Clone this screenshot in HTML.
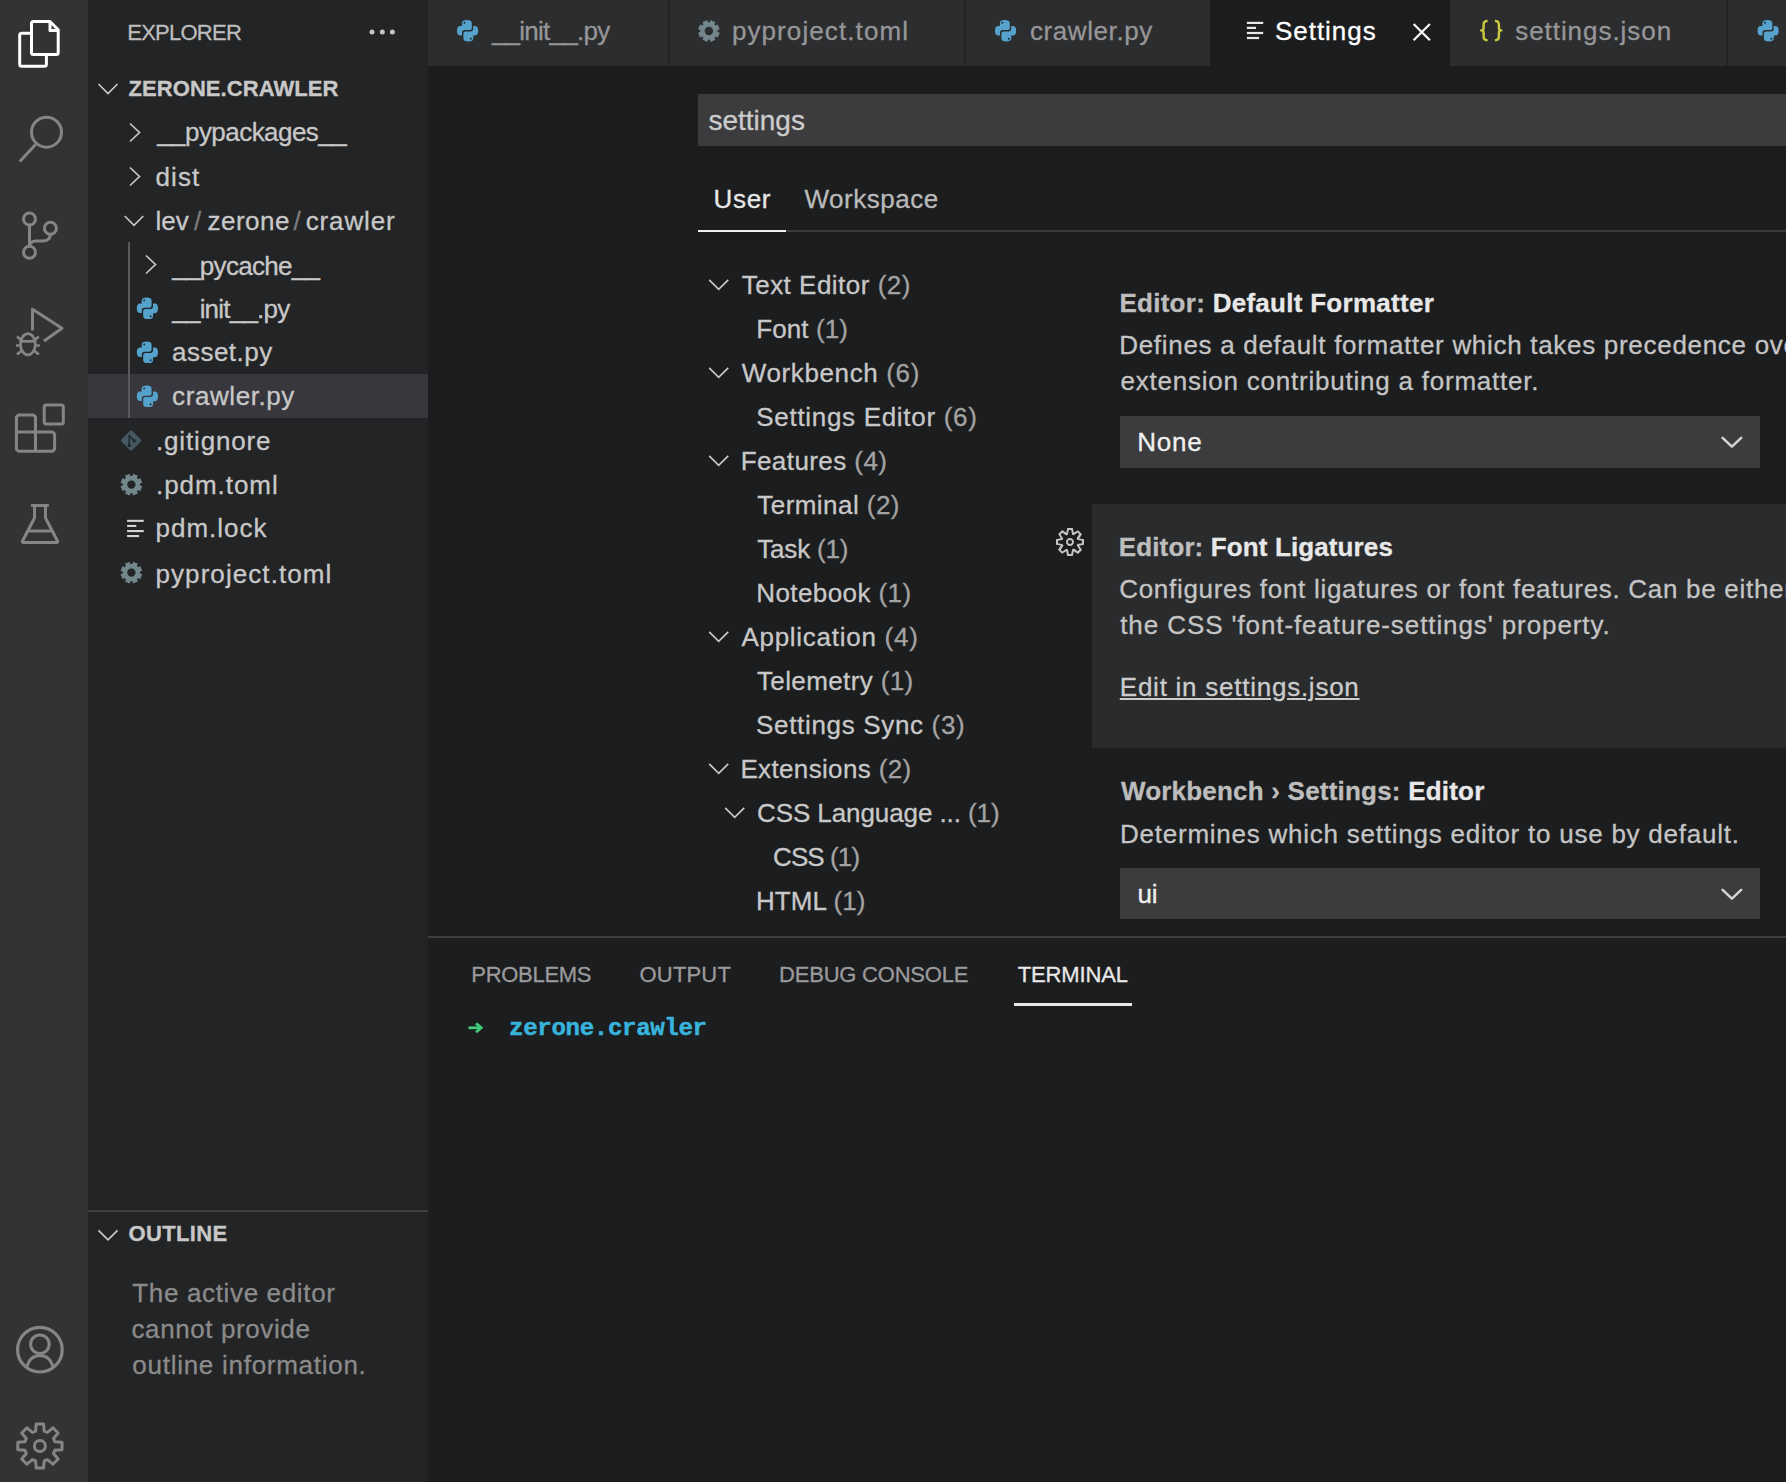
<!DOCTYPE html>
<html><head><meta charset="utf-8">
<style>
html,body{margin:0;padding:0;}
body{width:1786px;height:1482px;position:relative;overflow:hidden;background:#1c1d1f;font-family:"Liberation Sans",sans-serif;}
.a{position:absolute;}
.t{position:absolute;white-space:pre;line-height:1;font-size:26px;color:#c8c8c8;-webkit-text-stroke:0.3px currentColor;}
svg{position:absolute;overflow:visible;}
.n{color:#a3a3a3;}
</style></head><body>

<!-- activity bar -->
<div class="a" style="left:0;top:0;width:88px;height:1482px;background:#323335;"></div>
<svg style="left:0;top:0" width="88" height="1482" fill="none" stroke-linejoin="round">
  <!-- explorer -->
  <g stroke="#ffffff" stroke-width="3">
    <path d="M31.5,23.5 Q31.5,21.5 33.5,21.5 L50,21.5 L58.2,29.7 L58.2,52.5 Q58.2,54.5 56.2,54.5 L33.5,54.5 Q31.5,54.5 31.5,52.5 Z"/>
    <path d="M50,21.5 L50,30.5 L58.2,30.5"/>
    <path d="M31.5,33.2 L21.7,33.2 Q19.7,33.2 19.7,35.2 L19.7,64.3 Q19.7,66.3 21.7,66.3 L44.4,66.3 Q46.4,66.3 46.4,64.3 L46.4,54.5"/>
  </g>
  <g stroke="#858585" stroke-width="3">
    <!-- search -->
    <circle cx="46.5" cy="132.2" r="15"/>
    <path d="M19.8,161.5 L35.6,144.6"/>
    <!-- scm -->
    <circle cx="29.5" cy="219" r="6"/>
    <circle cx="50.4" cy="228.2" r="6"/>
    <circle cx="29.5" cy="252.3" r="6"/>
    <path d="M29.5,225 L29.5,246.3"/>
    <path d="M50.4,234.2 Q50.4,241 42,241 L36,241 Q29.5,241 29.5,247"/>
    <!-- run/debug -->
    <path d="M32.5,330.4 L32.5,309.3 L62,328.3 L44,341"/>
    <!-- extensions -->
    <path d="M18.4,415 L33.5,415 L35.5,417 L35.5,432 L52.6,432 L54.6,434 L54.6,449.2 L52.6,451.2 L18.4,451.2 L16.4,449.2 L16.4,417 Z"/>
    <path d="M16.4,432 L35.5,432 L35.5,451.2"/>
    <rect x="44.2" y="404.9" width="19.1" height="19" rx="2"/>
    <!-- testing flask -->
    <path d="M31,505.5 L48.8,505.5"/>
    <path d="M34.5,505.5 L34.5,518 L22.5,541 Q22,542.5 23.5,542.5 L56.5,542.5 Q58,542.5 57.5,541 L45.5,518 L45.5,505.5"/>
    <path d="M28,531 L52,531"/>
    <!-- account -->
    <circle cx="39.9" cy="1349.7" r="22.3" stroke-width="3.2"/>
    <circle cx="39.9" cy="1344.2" r="9.3"/>
    <path d="M26.5,1367.5 Q30,1355.5 39.9,1355.5 Q49.8,1355.5 53.3,1367.5"/>
    <!-- gear -->
    <path transform="translate(39.9,1446)" d="M22.10,-3.68 L22.10,3.68 L14.88,4.32 L13.58,7.47 L18.22,13.02 L13.02,18.22 L7.47,13.58 L4.32,14.88 L3.68,22.10 L-3.68,22.10 L-4.32,14.88 L-7.47,13.58 L-13.02,18.22 L-18.22,13.02 L-13.58,7.47 L-14.88,4.32 L-22.10,3.68 L-22.10,-3.68 L-14.88,-4.32 L-13.58,-7.47 L-18.22,-13.02 L-13.02,-18.22 L-7.47,-13.58 L-4.32,-14.88 L-3.68,-22.10 L3.68,-22.10 L4.32,-14.88 L7.47,-13.58 L13.02,-18.22 L18.22,-13.02 L13.58,-7.47 L14.88,-4.32 Z"/>
    <circle cx="39.9" cy="1446" r="5.5"/>
  </g>
  <!-- bug -->
  <g stroke="#858585" stroke-width="2.7" stroke-linecap="butt" fill="none">
    <ellipse cx="27.9" cy="344.2" rx="7.4" ry="10.6"/>
    <path d="M20.6,341.3 L35.2,341.3"/>
    <path d="M16,345.5 L20.5,345.5 M35.3,345.5 L39.8,345.5"/>
    <path d="M17,336.5 L21.8,340.6 M38.8,336.5 L34,340.6"/>
    <path d="M17,354.6 L21.8,350.4 M38.8,354.6 L34,350.4"/>
  </g>
</svg>

<!-- sidebar -->
<div class="a" style="left:88px;top:0;width:340px;height:1482px;background:#232426;"></div>
<svg width="0" height="0" style="position:absolute">
  <defs>
    <g id="py">
      <path fill="#55a2cc" d="M4.9,3.2 C4.9,1 6.5,0 9.9,0 C13.2,0 14.8,1 14.8,3.2 L14.8,8.0 C14.8,9.4 13.9,10.1 12.5,10.1 L7.6,10.1 C6.0,10.1 5.0,11.1 5.0,12.6 L5.0,15.5 L3.4,15.5 C1.0,15.5 0,13.6 0,10.7 C0,7.8 1.0,5.9 3.4,5.9 L4.9,5.9 Z"/>
      <path fill="#55a2cc" transform="rotate(180 10.6 10.75)" d="M4.9,3.2 C4.9,1 6.5,0 9.9,0 C13.2,0 14.8,1 14.8,3.2 L14.8,8.0 C14.8,9.4 13.9,10.1 12.5,10.1 L7.6,10.1 C6.0,10.1 5.0,11.1 5.0,12.6 L5.0,15.5 L3.4,15.5 C1.0,15.5 0,13.6 0,10.7 C0,7.8 1.0,5.9 3.4,5.9 L4.9,5.9 Z"/>
      <circle cx="7.4" cy="2.8" r="0.95" fill="#1a2a36"/>
      <circle cx="13.8" cy="18.7" r="0.95" fill="#1a2a36"/>
    </g>
    <path id="sgear" fill-rule="evenodd" stroke-linejoin="round" d="M1.64,-10.88 L6.54,-8.85 L5.39,-6.83 L6.83,-5.39 L8.85,-6.54 L10.88,-1.64 L8.64,-1.02 L8.64,1.02 L10.88,1.64 L8.85,6.54 L6.83,5.39 L5.39,6.83 L6.54,8.85 L1.64,10.88 L1.02,8.64 L-1.02,8.64 L-1.64,10.88 L-6.54,8.85 L-5.39,6.83 L-6.83,5.39 L-8.85,6.54 L-10.88,1.64 L-8.64,1.02 L-8.64,-1.02 L-10.88,-1.64 L-8.85,-6.54 L-6.83,-5.39 L-5.39,-6.83 L-6.54,-8.85 L-1.64,-10.88 L-1.02,-8.64 L1.02,-8.64 Z M-4.2,0 A4.2,4.2 0 1 0 4.2,0 A4.2,4.2 0 1 0 -4.2,0 Z"/>
  </defs>
</svg>
<div class="a" style="left:425px;top:0;width:3px;height:1482px;background:#212224;"></div>
<!-- selected row -->
<div class="a" style="left:88px;top:374px;width:340px;height:44px;background:#37373d;"></div>
<!-- indent guide -->
<div class="a" style="left:128px;top:242px;width:2px;height:176px;background:#5a5a5c;"></div>
<!-- outline border -->
<div class="a" style="left:88px;top:1210px;width:340px;height:2px;background:#404042;"></div>

<svg style="left:0;top:0" width="428" height="1482" fill="none">
  <!-- dots -->
  <g fill="#c5c5c5"><circle cx="372" cy="32" r="2.5"/><circle cx="382.3" cy="32" r="2.5"/><circle cx="392.4" cy="32" r="2.5"/></g>
  <g stroke="#c8c8c8" stroke-width="1.7" stroke-linejoin="miter" stroke-linecap="butt">
    <path d="M98.5,84 L108,93.5 L117.5,84"/>
    <path d="M130,123.5 L139.5,132.5 L130,141.5"/>
    <path d="M130,167.5 L139.5,176.5 L130,185.5"/>
    <path d="M124.7,216 L134,225.3 L143.3,216"/>
    <path d="M146,255.5 L155.5,264.5 L146,273.5"/>
    <path d="M98.5,1230.3 L108,1239.8 L117.5,1230.3"/>
  </g>
  <use href="#py" x="136.8" y="297.6"/>
  <use href="#py" x="136.8" y="341.6"/>
  <use href="#py" x="136.8" y="385.6"/>
  <!-- git diamond -->
  <g transform="translate(131.1,440.6) rotate(45)"><rect x="-7.6" y="-7.6" width="15.2" height="15.2" rx="1.8" fill="#46585f"/></g>
  <g stroke="#1f2a2e" stroke-width="1.6" fill="none"><path d="M129.3,434.5 L129.3,445.5 M129.6,436 L134.3,441"/></g>
  <g fill="#1f2a2e"><circle cx="129.3" cy="445.5" r="1.7"/><circle cx="134.3" cy="441" r="1.7"/></g>
  <use href="#sgear" x="131.4" y="484.6" fill="#72868c"/>
  <use href="#sgear" x="131.4" y="572.6" fill="#72868c"/>
  <!-- pdm.lock lines -->
  <g fill="#d4d4d4">
    <rect x="127.1" y="519.8" width="16.6" height="2.1"/>
    <rect x="127.1" y="524.9" width="9.2" height="2.1"/>
    <rect x="127.1" y="530" width="16.6" height="2.1"/>
    <rect x="127.1" y="535" width="12" height="2.1"/>
  </g>
</svg>

<div class="t" id="s_explorer" style="left:127.3px;top:21.8px;font-size:22px;color:#bdbdbd;letter-spacing:-0.76px">EXPLORER</div>
<div class="t" id="s_root" style="left:128.5px;top:77.6px;font-size:22px;font-weight:bold;letter-spacing:0.07px">ZERONE.CRAWLER</div>
<div class="t" id="s_pyp" style="left:157.2px;top:119.4px;letter-spacing:-0.55px">__pypackages__</div>
<div class="t" id="s_dist" style="left:155.6px;top:163.6px;letter-spacing:1.03px">dist</div>
<div class="t" id="s_lev" style="left:155.5px;top:208px;letter-spacing:0.00px">lev</div>
<div class="t" style="left:194px;top:208px;color:#7c7c7c">/</div>
<div class="t" id="s_zer" style="left:207.5px;top:208px;letter-spacing:0.50px">zerone</div>
<div class="t" style="left:293.5px;top:208px;color:#7c7c7c">/</div>
<div class="t" id="s_craw" style="left:305.7px;top:208px;letter-spacing:0.87px">crawler</div>
<div class="t" id="s_pyc" style="left:172.3px;top:253.2px;letter-spacing:-0.70px">__pycache__</div>
<div class="t" id="s_init" style="left:172.3px;top:296px;letter-spacing:-0.79px">__init__.py</div>
<div class="t" id="s_asset" style="left:172.1px;top:339px;letter-spacing:0.46px">asset.py</div>
<div class="t" id="s_crawpy" style="left:172.1px;top:382.8px;letter-spacing:0.58px">crawler.py</div>
<div class="t" id="s_git" style="left:156.0px;top:427.9px;letter-spacing:0.84px">.gitignore</div>
<div class="t" id="s_pdmt" style="left:156.0px;top:471.5px;letter-spacing:0.94px">.pdm.toml</div>
<div class="t" id="s_lock" style="left:155.5px;top:515px;letter-spacing:1.00px">pdm.lock</div>
<div class="t" id="s_pyproj" style="left:155.5px;top:560.6px;letter-spacing:1.07px">pyproject.toml</div>

<div class="t" id="s_outline" style="left:128.5px;top:1223.1px;font-size:22px;font-weight:bold;letter-spacing:0.37px">OUTLINE</div>
<div class="t" id="s_o1" style="left:132.3px;top:1280px;color:#8b8b8b;letter-spacing:0.65px">The active editor</div>
<div class="t" id="s_o2" style="left:131.5px;top:1316px;color:#8b8b8b;letter-spacing:0.6px">cannot provide</div>
<div class="t" id="s_o3" style="left:132.3px;top:1352px;color:#8b8b8b;letter-spacing:0.73px">outline information.</div>

<!-- editor -->
<!-- tabs -->
<div class="a" style="left:428px;top:0;width:1358px;height:66px;background:#2c2d2f;"></div>
<div class="a" style="left:668px;top:0;width:1.5px;height:66px;background:#232426;"></div>
<div class="a" style="left:964px;top:0;width:1.5px;height:66px;background:#232426;"></div>
<div class="a" style="left:1210px;top:0;width:240px;height:66px;background:#1c1d1f;"></div>
<div class="a" style="left:1726px;top:0;width:1.5px;height:66px;background:#232426;"></div>
<svg style="left:0;top:0" width="1786" height="66" fill="none">
  <use href="#py" x="457" y="20"/>
  <use href="#sgear" x="708.9" y="31" fill="#72868c"/>
  <use href="#py" x="995" y="20"/>
  <g fill="#e8e8e8">
    <rect x="1246.9" y="21.8" width="16.3" height="2.2"/>
    <rect x="1246.9" y="26.8" width="9.1" height="2.2"/>
    <rect x="1246.9" y="31.9" width="16.3" height="2.2"/>
    <rect x="1246.9" y="36.9" width="12.2" height="2.2"/>
  </g>
  <path d="M1413.6,24 L1429.9,40.3 M1429.9,24 L1413.6,40.3" stroke="#f4f4f4" stroke-width="2.3"/>
  <use href="#py" x="1757.5" y="20"/>
</svg>
<svg style="left:0;top:0" width="1786" height="66" fill="none"><g stroke="#cbcb41" stroke-width="2.4" stroke-linejoin="round">
  <path d="M1487.6,20.9 Q1483.6,20.9 1483.6,24.8 L1483.6,28 Q1483.6,30.4 1481.2,30.4 Q1483.6,30.4 1483.6,32.8 L1483.6,36.2 Q1483.6,40.2 1487.6,40.2"/>
  <path d="M1494.9,20.9 Q1498.9,20.9 1498.9,24.8 L1498.9,28 Q1498.9,30.4 1501.3,30.4 Q1498.9,30.4 1498.9,32.8 L1498.9,36.2 Q1498.9,40.2 1494.9,40.2"/>
</g></svg>
<div class="t" id="tb1" style="left:491.9px;top:18.4px;color:#969698;letter-spacing:-0.74px">__init__.py</div>
<div class="t" id="tb2" style="left:731.9px;top:18.4px;color:#969698;letter-spacing:1.10px">pyproject.toml</div>
<div class="t" id="tb3" style="left:1029.9px;top:18.4px;color:#969698;letter-spacing:0.60px">crawler.py</div>
<div class="t" id="tb4" style="left:1275.0px;top:18.4px;color:#ffffff;letter-spacing:0.96px">Settings</div>
<div class="t" id="tb5" style="left:1515.2px;top:18.4px;color:#969698;letter-spacing:0.95px">settings.json</div>

<!-- settings header -->
<div class="a" style="left:698px;top:94px;width:1088px;height:52px;background:#3c3c3e;"></div>
<div class="t" id="e_search" style="left:708.5px;top:106.5px;font-size:28px;color:#cccccc;;letter-spacing:-0.01px">settings</div>
<div class="t" id="e_user" style="left:713.6px;top:185.8px;color:#e8e8e8;letter-spacing:0.63px">User</div>
<div class="t" id="e_ws" style="left:804.4px;top:185.8px;color:#bababa;letter-spacing:0.53px">Workspace</div>
<div class="a" style="left:698px;top:230px;width:1088px;height:2px;background:#3a3a3c;"></div>
<div class="a" style="left:698px;top:229.6px;width:88px;height:2.6px;background:#f0f0f0;"></div>

<!-- TOC -->
<svg style="left:0;top:0" width="1786" height="940" fill="none">
  <g stroke="#c8c8c8" stroke-width="1.7">
    <path d="M709.2,279.8 L718.7,289.3 L728.2,279.8"/>
    <path d="M709.2,367.8 L718.7,377.3 L728.2,367.8"/>
    <path d="M709.2,455.8 L718.7,465.3 L728.2,455.8"/>
    <path d="M709.2,631.8 L718.7,641.3 L728.2,631.8"/>
    <path d="M709.2,763.8 L718.7,773.3 L728.2,763.8"/>
    <path d="M725.2,807.8 L734.7,817.3 L744.2,807.8"/>
  </g>
</svg>
<div class="toc">
<div class="t" id="c1" style="left:741.7px;top:272.4px;letter-spacing:0.49px">Text Editor <span class="n">(2)</span></div>
<div class="t" id="c2" style="left:756.3px;top:316.4px;letter-spacing:0.07px">Font <span class="n">(1)</span></div>
<div class="t" id="c3" style="left:741.7px;top:360.4px;letter-spacing:0.63px">Workbench <span class="n">(6)</span></div>
<div class="t" id="c4" style="left:756.3px;top:404.4px;letter-spacing:0.69px">Settings Editor <span class="n">(6)</span></div>
<div class="t" id="c5" style="left:740.7px;top:448.4px;letter-spacing:0.42px">Features <span class="n">(4)</span></div>
<div class="t" id="c6" style="left:757.3px;top:492.4px;letter-spacing:0.45px">Terminal <span class="n">(2)</span></div>
<div class="t" id="c7" style="left:757.3px;top:536.4px;letter-spacing:-0.20px">Task <span class="n">(1)</span></div>
<div class="t" id="c8" style="left:756.3px;top:580.4px;letter-spacing:0.41px">Notebook <span class="n">(1)</span></div>
<div class="t" id="c9" style="left:741.4px;top:624.4px;letter-spacing:0.73px">Application <span class="n">(4)</span></div>
<div class="t" id="c10" style="left:757.0px;top:668.4px;letter-spacing:0.37px">Telemetry <span class="n">(1)</span></div>
<div class="t" id="c11" style="left:756.0px;top:712.4px;letter-spacing:0.67px">Settings Sync <span class="n">(3)</span></div>
<div class="t" id="c12" style="left:740.4px;top:756.4px;letter-spacing:0.35px">Extensions <span class="n">(2)</span></div>
<div class="t" id="c13" style="left:757.0px;top:800.4px;letter-spacing:-0.09px">CSS Language ... <span class="n">(1)</span></div>
<div class="t" id="c14" style="left:773.0px;top:844.4px;letter-spacing:-0.90px">CSS <span class="n">(1)</span></div>
<div class="t" id="c15" style="left:756.0px;top:888.4px;letter-spacing:0.09px">HTML <span class="n">(1)</span></div>
</div>

<!-- settings list -->
<div class="a" style="left:1092px;top:504px;width:694px;height:244px;background:#2a2b2d;"></div>
<svg style="left:1054px;top:525.8px" width="32" height="32" viewBox="0 0 16 16" fill="#c5c5c5">
  <path fill-rule="evenodd" d="M9.1 4.4L8.6 2H7.4l-.5 2.4-.7.3-2-1.3-.9.8 1.3 2-.2.7-2.4.5v1.2l2.4.5.3.8-1.3 2 .8.8 2-1.3.8.3.4 2.3h1.2l.5-2.4.8-.3 2 1.3.8-.8-1.3-2 .3-.8 2.3-.4V7.4l-2.4-.5-.3-.8 1.3-2-.8-.8-2 1.3-.7-.2zM9.4 1l.5 2.4L12 2.1l2 2-1.4 2.1 2.4.4v2.8l-2.4.5L14 12l-2 2-2.1-1.4-.5 2.4H6.6l-.5-2.4L4 13.9l-2-2 1.4-2.1L1 9.4V6.6l2.4-.5L2.1 4l2-2 2.1 1.4.4-2.4h2.8zm.6 7c0 1.1-.9 2-2 2s-2-.9-2-2 .9-2 2-2 2 .9 2 2zM8 9c.6 0 1-.4 1-1s-.4-1-1-1-1 .4-1 1 .4 1 1 1z"/>
</svg>

<div class="t" id="r1t" style="left:1119.4px;top:289.7px;font-weight:bold;color:#bdbdbd;letter-spacing:0.28px">Editor: <span style="color:#e8e8e8">Default Formatter</span></div>
<div class="t" id="r1d1" style="left:1119.2px;top:331.8px;color:#c4c4c4;letter-spacing:0.7px">Defines a default formatter which takes precedence over any other setting</div>
<div class="t" id="r1d2" style="left:1120.4px;top:367.8px;color:#c4c4c4;letter-spacing:0.78px">extension contributing a formatter.</div>
<div class="a" style="left:1120px;top:416px;width:640px;height:52px;background:#3c3c3e;"></div>
<div class="t" id="r1v" style="left:1137.3px;top:429.2px;color:#f0f0f0;;letter-spacing:0.77px">None</div>

<div class="t" id="r2t" style="left:1118.8px;top:533.6px;font-weight:bold;color:#bdbdbd;letter-spacing:0.12px">Editor: <span style="color:#e8e8e8">Font Ligatures</span></div>
<div class="t" id="r2d1" style="left:1119.2px;top:576.2px;color:#c4c4c4;letter-spacing:0.7px">Configures font ligatures or font features. Can be either a boolean</div>
<div class="t" id="r2d2" style="left:1120.2px;top:612.2px;color:#c4c4c4;letter-spacing:0.91px">the CSS 'font-feature-settings' property.</div>
<div class="t" id="r2l" style="left:1119.8px;top:673.5px;color:#cccccc;letter-spacing:0.75px;text-decoration:underline;text-underline-offset:2px">Edit in settings.json</div>

<div class="t" id="r3t" style="left:1120.9px;top:777.9px;font-weight:bold;color:#bdbdbd;letter-spacing:0.21px">Workbench › Settings: <span style="color:#e8e8e8">Editor</span></div>
<div class="t" id="r3d1" style="left:1120.0px;top:820.5px;color:#c4c4c4;letter-spacing:0.76px">Determines which settings editor to use by default.</div>
<div class="a" style="left:1120px;top:868px;width:640px;height:51px;background:#3c3c3e;"></div>
<div class="t" id="r3v" style="left:1137.4px;top:881.1px;color:#f0f0f0;">ui</div>
<svg style="left:0;top:0" width="1786" height="940" fill="none">
  <g stroke="#d4d4d4" stroke-width="2.5" stroke-linecap="round" stroke-linejoin="round">
    <path d="M1722.6,437.8 L1731.9,446.7 L1741.2,437.8"/>
    <path d="M1722.6,889.8 L1731.9,898.7 L1741.2,889.8"/>
  </g>
</svg>

<!-- panel -->
<div class="a" style="left:428px;top:936px;width:1358px;height:2px;background:#3e3e40;"></div>
<div class="t" id="p1" style="left:471.3px;top:964.1px;font-size:22px;color:#9a9a9c;letter-spacing:-0.29px">PROBLEMS</div>
<div class="t" id="p2" style="left:639.6px;top:964.1px;font-size:22px;color:#9a9a9c;letter-spacing:0.16px">OUTPUT</div>
<div class="t" id="p3" style="left:779.1px;top:964.1px;font-size:22px;color:#9a9a9c;letter-spacing:-0.22px">DEBUG CONSOLE</div>
<div class="t" id="p4" style="left:1017.7px;top:964.1px;font-size:22px;color:#e8e8e8;letter-spacing:-0.14px">TERMINAL</div>
<div class="a" style="left:1014px;top:1003px;width:118px;height:3px;background:#e8e8e8;"></div>
<svg style="left:0;top:0" width="1786" height="1100" fill="none">
  <path d="M468.5,1027.8 L479.5,1027.8" stroke="#3fcb78" stroke-width="2.8"/><path d="M476,1023.4 L481.2,1027.8 L476,1032.2" stroke="#3fcb78" stroke-width="2.8" stroke-linejoin="miter"/>
</svg>
<div class="t" id="term" style="left:509.1px;top:1017.1px;font-family:'Liberation Mono',monospace;font-weight:bold;font-size:24.2px;color:#38b4dc;letter-spacing:-0.4px;-webkit-text-stroke:0.5px currentColor">zerone.crawler</div>

</body></html>
